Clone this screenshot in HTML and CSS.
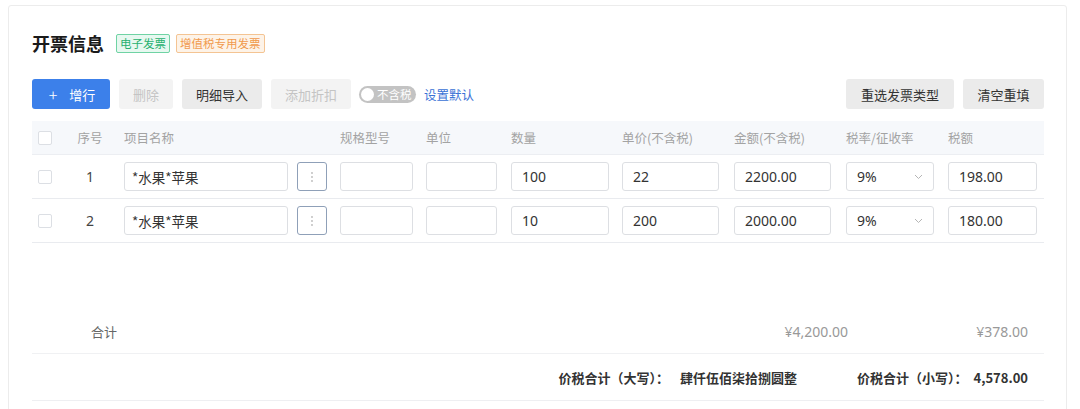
FILE: index.html
```html
<!DOCTYPE html>
<html lang="zh-CN">
<head>
<meta charset="utf-8">
<title>开票信息</title>
<link rel="stylesheet" href="styles.css">
</head>
<body>
<div class="card">
  <div class="title-row">
    <h2 class="title">开票信息</h2>
    <span class="tag tag-green">电子发票</span>
    <span class="tag tag-orange">增值税专用发票</span>
  </div>

  <div class="toolbar">
    <div class="toolbar-left">
      <button class="btn btn-primary"><span class="plus">+</span>增行</button>
      <button class="btn btn-disabled">删除</button>
      <button class="btn btn-gray">明细导入</button>
      <button class="btn btn-disabled">添加折扣</button>
      <span class="switch"><span class="knob"></span><span class="switch-text">不含税</span></span>
      <a class="link">设置默认</a>
    </div>
    <div class="toolbar-right">
      <button class="btn btn-gray btn-wide">重选发票类型</button>
      <button class="btn btn-gray">清空重填</button>
    </div>
  </div>

  <div class="table">
    <div class="grid head">
      <div class="cell c-check"><span class="checkbox"></span></div>
      <div class="cell c-idx">序号</div>
      <div class="cell">项目名称</div>
      <div class="cell">规格型号</div>
      <div class="cell">单位</div>
      <div class="cell">数量</div>
      <div class="cell">单价(不含税)</div>
      <div class="cell">金额(不含税)</div>
      <div class="cell">税率/征收率</div>
      <div class="cell">税额</div>
    </div>

    <div class="grid row">
      <div class="cell c-check"><span class="checkbox"></span></div>
      <div class="cell c-idx num">1</div>
      <div class="cell c-name"><span class="input w-name">*水果*苹果</span><span class="more"><svg width="4" height="12" viewBox="0 0 4 12"><circle cx="2" cy="2" r="0.9" fill="#b9b9b9"/><circle cx="2" cy="6" r="0.9" fill="#b9b9b9"/><circle cx="2" cy="10" r="0.9" fill="#b9b9b9"/></svg></span></div>
      <div class="cell"><span class="input w-spec"></span></div>
      <div class="cell"><span class="input w-unit"></span></div>
      <div class="cell"><span class="input w-qty">100</span></div>
      <div class="cell"><span class="input w-price">22</span></div>
      <div class="cell"><span class="input w-amt">2200.00</span></div>
      <div class="cell"><span class="input select w-rate">9%<svg class="chev" width="9" height="6" viewBox="0 0 9 6"><polyline points="1,1 4.5,4.5 8,1" fill="none" stroke="#b5b5b5" stroke-width="1"/></svg></span></div>
      <div class="cell"><span class="input w-tax">198.00</span></div>
    </div>

    <div class="grid row">
      <div class="cell c-check"><span class="checkbox"></span></div>
      <div class="cell c-idx num">2</div>
      <div class="cell c-name"><span class="input w-name">*水果*苹果</span><span class="more"><svg width="4" height="12" viewBox="0 0 4 12"><circle cx="2" cy="2" r="0.9" fill="#b9b9b9"/><circle cx="2" cy="6" r="0.9" fill="#b9b9b9"/><circle cx="2" cy="10" r="0.9" fill="#b9b9b9"/></svg></span></div>
      <div class="cell"><span class="input w-spec"></span></div>
      <div class="cell"><span class="input w-unit"></span></div>
      <div class="cell"><span class="input w-qty">10</span></div>
      <div class="cell"><span class="input w-price">200</span></div>
      <div class="cell"><span class="input w-amt">2000.00</span></div>
      <div class="cell"><span class="input select w-rate">9%<svg class="chev" width="9" height="6" viewBox="0 0 9 6"><polyline points="1,1 4.5,4.5 8,1" fill="none" stroke="#b5b5b5" stroke-width="1"/></svg></span></div>
      <div class="cell"><span class="input w-tax">180.00</span></div>
    </div>

    <div class="spacer"></div>

    <div class="grid total">
      <div class="cell c-check"></div>
      <div class="cell c-sum">合计</div>
      <div class="cell"></div>
      <div class="cell"></div>
      <div class="cell"></div>
      <div class="cell"></div>
      <div class="cell"></div>
      <div class="cell c-money c-amt-total">¥4,200.00</div>
      <div class="cell"></div>
      <div class="cell c-money c-tax-total">¥378.00</div>
    </div>

    <div class="grand">
      <span class="grand-item">价税合计（大写）：<span class="grand-val grand-val-cn">肆仟伍佰柒拾捌圆整</span></span>
      <span class="grand-item">价税合计（小写）：<span class="grand-val grand-val-num">4,578.00</span></span>
    </div>
  </div>
</div>
</body>
</html>
```

FILE: styles.css
```css
* { box-sizing: border-box; }

html, body {
  margin: 0;
  padding: 0;
  background: #ffffff;
}

body {
  font-family: "Noto Sans", "Noto Sans CJK SC", sans-serif;
  color: #333;
  font-size: 13px;
}

.card {
  margin: 5px 0 0 8px;
  width: 1059px;
  min-height: 430px;
  border: 1px solid #ececec;
  border-radius: 3px;
  padding: 25px 22px 20px 23px;
  background: #fff;
}

.title-row {
  display: flex;
  align-items: center;
  height: 24px;
}

.title {
  margin: 0 12px 0 0;
  font-size: 18px;
  font-weight: 700;
  color: #1a1a1a;
  line-height: 24px;
  font-family: "Noto Sans CJK SC", sans-serif;
}

.tag {
  display: inline-flex;
  align-items: center;
  height: 19px;
  padding: 0 3px;
  font-size: 11.5px;
  border: 1px solid;
  border-radius: 2px;
  margin-right: 6px;
  font-family: "Noto Sans CJK SC", sans-serif;
}

.tag-green {
  color: #27b06f;
  background: #e7f8f0;
  border-color: #6fd3a4;
}

.tag-orange {
  color: #f19a4c;
  background: #fdf3e8;
  border-color: #f4c493;
}

.toolbar {
  margin-top: 24px;
  display: flex;
  justify-content: space-between;
  align-items: center;
  height: 30px;
}

.toolbar-left,
.toolbar-right {
  display: flex;
  align-items: center;
  gap: 9px;
}

.btn {
  height: 30px;
  border: none;
  border-radius: 3px;
  padding: 0 14px;
  font-size: 13px;
  font-family: "Noto Sans CJK SC", sans-serif;
  display: inline-flex;
  align-items: center;
  justify-content: center;
}

.btn-wide {
  padding: 0 15px;
}

.btn-primary {
  background: #3c80ea;
  color: #fff;
  padding: 0 14px 0 16px;
  width: 78px;
}

.plus {
  font-size: 16px;
  line-height: 1;
  margin-right: 12px;
  font-weight: 300;
}

.btn-disabled {
  background: #f3f3f3;
  color: #c4c4c4;
}

.btn-gray {
  background: #ebebeb;
  color: #333;
}

.toolbar-right .btn-gray:last-child {
  width: 81px;
}

.switch {
  margin-left: -1px;
  width: 57px;
  height: 17px;
  border-radius: 9px;
  background: #c3c3c3;
  display: inline-flex;
  align-items: center;
  padding: 0 2px;
}

.knob {
  width: 13px;
  height: 13px;
  border-radius: 50%;
  background: #fff;
  flex: none;
}

.switch-text {
  color: #fff;
  font-size: 11.5px;
  margin-left: 3px;
  font-family: "Noto Sans CJK SC", sans-serif;
}

.link {
  color: #3a72d6;
  font-size: 12.5px;
  margin-left: -1px;
  font-family: "Noto Sans CJK SC", sans-serif;
}

.table {
  margin-top: 12px;
  width: 1012px;
}

.grid {
  display: grid;
  grid-template-columns: 38px 54px 216px 86px 85px 111px 112px 112px 102px 96px;
  align-items: center;
}

.head {
  height: 34px;
  background: #f6f8fb;
  border-bottom: 1px solid #eceef2;
  color: #a3a3a3;
  font-size: 12.5px;
  font-family: "Noto Sans CJK SC", sans-serif;
}

.row {
  height: 44px;
  border-bottom: 1px solid #e9ebef;
}

.cell {
  display: flex;
  align-items: center;
}

.c-check {
  padding-left: 6px;
}

.checkbox {
  width: 14px;
  height: 14px;
  border: 1px solid #dcdfe4;
  border-radius: 2px;
  background: #fff;
}

.c-idx {
  justify-content: center;
  padding-right: 14px;
}

.num {
  font-size: 14px;
  color: #444;
}

.c-name {
  gap: 9px;
}

.input {
  height: 29px;
  border: 1px solid #dddfe3;
  border-radius: 3px;
  background: #fff;
  padding: 0 10px;
  display: flex;
  align-items: center;
  font-size: 14px;
  color: #333;
}

.w-name { width: 164px; font-family: "Noto Sans CJK SC", sans-serif; font-size: 13.5px; padding-left: 7px; }
.w-spec { width: 73px; }
.w-unit { width: 71px; }
.w-qty { width: 98px; }
.w-price { width: 97px; }
.w-amt { width: 97px; }
.w-rate { width: 88px; }
.w-tax { width: 89px; }

.select {
  justify-content: space-between;
  padding-right: 10px;
}

.more {
  width: 30px;
  height: 29px;
  border: 1px solid #8fa0b8;
  border-radius: 3px;
  display: flex;
  align-items: center;
  justify-content: center;
}

.spacer {
  height: 67px;
}

.total {
  height: 44px;
  border-bottom: 1px solid #f0f1f3;
  color: #999;
  font-size: 14px;
}

.c-sum {
  padding-left: 21px;
  color: #666;
  font-size: 13px;
  font-family: "Noto Sans CJK SC", sans-serif;
}

.c-money {
  justify-content: flex-end;
}

.c-amt-total {
  margin-right: -2px;
}

.c-tax-total {
  padding-right: 16px;
}

.grand {
  height: 47px;
  border-bottom: 1px solid #eeeff2;
  display: flex;
  justify-content: flex-end;
  align-items: center;
  gap: 60px;
  padding-right: 16px;
  font-weight: 700;
  font-size: 13px;
  color: #333;
}

.grand-item {
  font-family: "Noto Sans CJK SC", sans-serif;
  display: inline-flex;
  align-items: center;
}

.grand-val-cn {
  margin-left: 11px;
}

.grand-val-num {
  margin-left: 6px;
}
```
